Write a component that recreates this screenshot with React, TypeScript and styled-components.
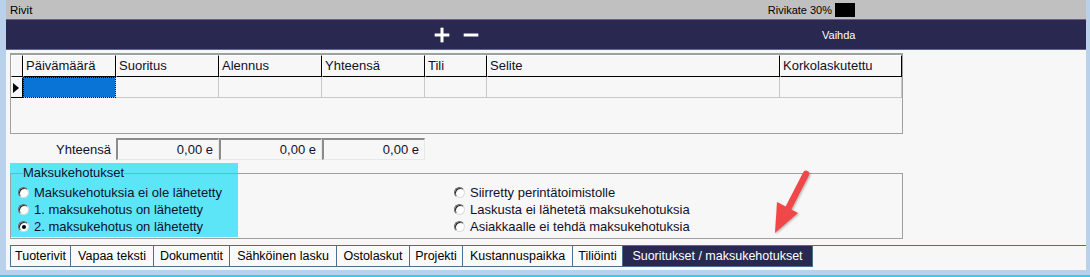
import styled, { createGlobalStyle } from 'styled-components';
import { Plus, Minus } from 'lucide-react';

const GlobalStyle = createGlobalStyle`
  html, body {
    margin: 0;
    padding: 0;
    background: #b9d1ea;
  }
  body {
    font-family: 'Liberation Sans', Arial, sans-serif;
    color: #10102a;
  }
`;

const Page = styled.div`
  position: relative;
  height: 275px;
  border-bottom: 2px solid #35cde6;
  overflow: hidden;
`;

const Frame = styled.div`
  margin-left: 6px;
  width: 1080px;
  background: #f7f7f7;
`;

const TitleBar = styled.div`
  height: 19px;
  background: #c0c0c0;
  border-bottom: 1px solid #4d6f8f;
  display: flex;
  align-items: center;
  padding: 0 231px 0 4px;
  font-size: 11.5px;
  color: #000;
`;

const Title = styled.span`
  flex: 1;
`;

const Rivikate = styled.div`
  display: flex;
  align-items: center;
  gap: 3px;
  font-size: 11px;
`;

const BlackBox = styled.span`
  width: 20px;
  height: 14px;
  background: #000;
`;

const NavBar = styled.div`
  height: 29px;
  background: #282850;
  border-bottom: 1px solid #4d6f8f;
  display: flex;
  align-items: center;
  color: #fff;
`;

const Tools = styled.div`
  display: flex;
  align-items: center;
  gap: 9px;
  margin-left: 426px;
`;

const Vaihda = styled.span`
  margin-left: 341px;
  font-size: 11px;
`;

const Content = styled.div`
  padding: 3px 0 3px 4px;
`;

const Table = styled.div`
  width: 891px;
  height: 78px;
  border: 1px solid #a0a0a0;
  border-top: 2px solid #a0a0a0;
  display: grid;
  grid-template-columns: 12px 93px 103px 103px 103px 62px 293px 122px;
  grid-template-rows: 22px 21px;
  align-content: start;
  background: #f7f7f7;
`;

const HeadCell = styled.div`
  box-sizing: border-box;
  border-top: 1px solid #fff;
  border-left: 1px solid #fff;
  border-right: 1px solid #000;
  border-bottom: 1px solid #000;
  font-size: 13px;
  line-height: 20px;
  padding-left: 2px;
  white-space: nowrap;
  overflow: hidden;
`;

const Cell = styled.div<{ $active?: boolean }>`
  box-sizing: border-box;
  border-right: 1px solid #c8c8c8;
  border-bottom: 1px solid #c8c8c8;
  background: ${(p) => (p.$active ? '#0a74d6' : 'transparent')};
  outline: ${(p) => (p.$active ? '1px dotted #000' : 'none')};
  outline-offset: -1px;
`;

const Indicator = styled.div`
  box-sizing: border-box;
  border-top: 1px solid #fff;
  border-right: 1px solid #000;
  border-bottom: 1px solid #000;
  display: flex;
  align-items: center;
  padding-left: 2px;
  &::before {
    content: '';
    border-left: 6px solid #000;
    border-top: 5px solid transparent;
    border-bottom: 5px solid transparent;
  }
`;

const TotalsRow = styled.div`
  display: flex;
  align-items: center;
  margin-top: 4px;
  height: 22px;
`;

const TotalsLabel = styled.span`
  width: 101px;
  text-align: right;
  padding-right: 5px;
  font-size: 13px;
`;

const TotalBox = styled.div`
  box-sizing: border-box;
  width: 103px;
  height: 22px;
  border-top: 2px solid #8c8c8c;
  border-left: 2px solid #8c8c8c;
  border-right: 1px solid #e8e8e8;
  border-bottom: 1px solid #e8e8e8;
  text-align: right;
  padding-right: 5px;
  font-size: 13px;
  line-height: 19px;
`;

const Group = styled.div`
  position: relative;
  margin-top: 3px;
  padding-top: 2px;
  width: 893px;
`;

const Highlight = styled.div`
  position: absolute;
  left: 0;
  top: 0;
  width: 228px;
  height: 74px;
  background: #5ce5f6;
`;

const Fieldset = styled.fieldset`
  position: relative;
  margin: 0;
  padding: 3px 7px 3px 7px;
  border: 1px solid #a0a0a0;
  display: grid;
  grid-template-columns: 436px 1fr;
  font-size: 13px;
`;

const Legend = styled.legend`
  padding: 0;
  margin-left: 5px;
  line-height: 16px;
  font-size: 13px;
`;

const Column = styled.div`
  display: flex;
  flex-direction: column;
`;

const Option = styled.label`
  display: flex;
  align-items: center;
  gap: 5px;
  height: 17px;
  white-space: nowrap;
`;

const RadioMark = styled.span<{ $checked?: boolean }>`
  position: relative;
  box-sizing: border-box;
  width: 11px;
  height: 11px;
  border-radius: 50%;
  border: 1px solid;
  border-color: #6a6a6a #dcdcdc #dcdcdc #6a6a6a;
  background: #fff;
  box-shadow: inset 1px 1px 0 #2a2a2a;
  &::after {
    content: '';
    display: ${(p) => (p.$checked ? 'block' : 'none')};
    position: absolute;
    left: 2.5px;
    top: 2.5px;
    width: 4px;
    height: 4px;
    border-radius: 50%;
    background: #000;
  }
`;

const TabStrip = styled.div`
  margin-top: 6px;
  border-top: 1px solid #4d6f8f;
  display: flex;
  height: 21px;
`;

const Tab = styled.div<{ $w: number; $active?: boolean }>`
  box-sizing: border-box;
  width: ${(p) => p.$w}px;
  border-left: 1px solid #4d6f8f;
  border-bottom: 1px solid #4d6f8f;
  &:last-child {
    border-right: 1px solid #4d6f8f;
  }
  background: ${(p) => (p.$active ? '#282850' : '#fafafa')};
  color: ${(p) => (p.$active ? '#fff' : '#000')};
  font-size: 12.5px;
  line-height: 20px;
  text-align: center;
  white-space: nowrap;
`;

const Arrow = styled.svg`
  position: absolute;
  left: 760px;
  top: 165px;
  pointer-events: none;
`;

const columns = ['Päivämäärä', 'Suoritus', 'Alennus', 'Yhteensä', 'Tili', 'Selite', 'Korkolaskutettu'];

const leftOptions = [
  { text: 'Maksukehotuksia ei ole lähetetty', checked: false },
  { text: '1. maksukehotus on lähetetty', checked: false },
  { text: '2. maksukehotus on lähetetty', checked: true },
];

const rightOptions = [
  'Siirretty perintätoimistolle',
  'Laskusta ei lähetetä maksukehotuksia',
  'Asiakkaalle ei tehdä maksukehotuksia',
];

const tabs = [
  { name: 'Tuoterivit', w: 60 },
  { name: 'Vapaa teksti', w: 83 },
  { name: 'Dokumentit', w: 76 },
  { name: 'Sähköinen lasku', w: 107 },
  { name: 'Ostolaskut', w: 73 },
  { name: 'Projekti', w: 53 },
  { name: 'Kustannuspaikka', w: 110 },
  { name: 'Tiliöinti', w: 50 },
  { name: 'Suoritukset / maksukehotukset', w: 191, active: true },
];

export default function App() {
  return (
    <>
      <GlobalStyle />
      <Page>
        <Frame>
          <TitleBar>
            <Title>Rivit</Title>
            <Rivikate>
              Rivikate 30%
              <BlackBox />
            </Rivikate>
          </TitleBar>
          <NavBar>
            <Tools>
              <Plus size={20} strokeWidth={3.6} strokeLinecap="square" />
              <Minus size={20} strokeWidth={3.6} strokeLinecap="square" />
            </Tools>
            <Vaihda>Vaihda</Vaihda>
          </NavBar>
          <Content>
            <Table>
              <HeadCell />
              {columns.map((c) => (
                <HeadCell key={c}>{c}</HeadCell>
              ))}
              <Indicator />
              {columns.map((c, i) => (
                <Cell key={c} $active={i === 0} />
              ))}
            </Table>
            <TotalsRow>
              <TotalsLabel>Yhteensä</TotalsLabel>
              <TotalBox>0,00 e</TotalBox>
              <TotalBox>0,00 e</TotalBox>
              <TotalBox>0,00 e</TotalBox>
            </TotalsRow>
            <Group>
              <Highlight />
              <Fieldset>
                <Legend>Maksukehotukset</Legend>
                <Column>
                  {leftOptions.map((o) => (
                    <Option key={o.text}>
                      <RadioMark $checked={o.checked} />
                      {o.text}
                    </Option>
                  ))}
                </Column>
                <Column>
                  {rightOptions.map((t) => (
                    <Option key={t}>
                      <RadioMark />
                      {t}
                    </Option>
                  ))}
                </Column>
              </Fieldset>
            </Group>
            <TabStrip>
              {tabs.map((t) => (
                <Tab key={t.name} $w={t.w} $active={t.active}>
                  {t.name}
                </Tab>
              ))}
            </TabStrip>
          </Content>
        </Frame>
        <Arrow width="60" height="75" viewBox="0 0 60 75">
          <defs>
            <filter id="shadow" x="-20%" y="-20%" width="140%" height="140%">
              <feDropShadow dx="1" dy="1" stdDeviation="1" floodColor="#000" floodOpacity="0.3" />
            </filter>
          </defs>
          <g filter="url(#shadow)" fill="#f0474a" stroke="none">
            <path d="M46 9 L28 44" stroke="#f0474a" strokeWidth="6.5" strokeLinecap="round" />
            <path d="M15 68 L17 37 L38 48 Z" />
          </g>
        </Arrow>
      </Page>
    </>
  );
}
